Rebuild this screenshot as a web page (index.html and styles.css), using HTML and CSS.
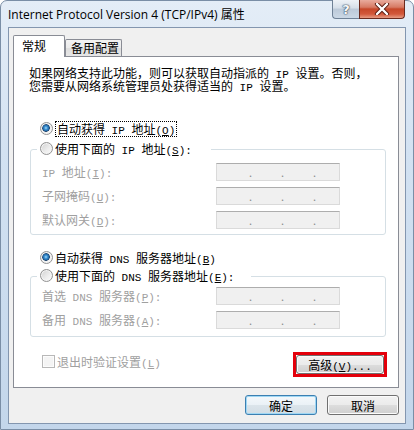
FILE: index.html
```html
<!DOCTYPE html>
<html lang="zh-CN">
<head>
    <meta charset="UTF-8">
    <title>Internet Protocol Version 4 (TCP/IPv4) 属性</title>
    <link rel="stylesheet" href="styles.css">
</head>
<body>
<div class="window">
    <div class="titlebar">
        <div class="title">Internet Protocol Version 4 (TCP/IPv4) 属性</div>
        <div class="caption-btns">
            <div class="cap-btn help">?</div>
            <div class="cap-btn close">
                <svg width="16" height="12" viewBox="0 0 16 12">
                    <path d="M3 1 L13 11 M13 1 L3 11" stroke="#5a1c12" stroke-width="4.2" stroke-linecap="round"/>
                    <path d="M3 1 L13 11 M13 1 L3 11" stroke="#ffffff" stroke-width="2.4" stroke-linecap="round"/>
                </svg>
            </div>
        </div>
    </div>

    <div class="client">
        <div class="tabs">
            <div class="tab active">常规</div>
            <div class="tab other">备用配置</div>
        </div>

        <div class="panel">
            <div class="desc">
                如果网络支持此功能，则可以获取自动指派的<span class="en"> IP </span>设置。否则，<br>
                您需要从网络系统管理员处获得适当的<span class="en"> IP </span>设置。
            </div>

            <div class="opt first-opt">
                <span class="radio checked"></span>
                <span class="focus">自动获得<span class="en"> IP </span>地址<span class="en">(<u>O</u>)</span></span>
            </div>

            <div class="group group-ip">
                <div class="legend legend-ip">
                    <span class="radio"></span>
                    <span>使用下面的<span class="en"> IP </span>地址<span class="en">(<u>S</u>):</span></span>
                </div>
                <div class="field">
                    <label><span class="en">IP </span>地址<span class="en">(<u>I</u>):</span></label>
                    <div class="ipbox"><span class="dot">.</span><span class="dot">.</span><span class="dot">.</span></div>
                </div>
                <div class="field">
                    <label>子网掩码<span class="en">(<u>U</u>):</span></label>
                    <div class="ipbox"><span class="dot">.</span><span class="dot">.</span><span class="dot">.</span></div>
                </div>
                <div class="field">
                    <label>默认网关<span class="en">(<u>D</u>):</span></label>
                    <div class="ipbox"><span class="dot">.</span><span class="dot">.</span><span class="dot">.</span></div>
                </div>
            </div>

            <div class="opt dns-opt">
                <span class="radio checked"></span>
                <span>自动获得<span class="en"> DNS </span>服务器地址<span class="en">(<u>B</u>)</span></span>
            </div>

            <div class="group group-dns">
                <div class="legend legend-dns">
                    <span class="radio"></span>
                    <span>使用下面的<span class="en"> DNS </span>服务器地址<span class="en">(<u>E</u>):</span></span>
                </div>
                <div class="field field-first">
                    <label>首选<span class="en"> DNS </span>服务器<span class="en">(<u>P</u>):</span></label>
                    <div class="ipbox"><span class="dot">.</span><span class="dot">.</span><span class="dot">.</span></div>
                </div>
                <div class="field">
                    <label>备用<span class="en"> DNS </span>服务器<span class="en">(<u>A</u>):</span></label>
                    <div class="ipbox"><span class="dot">.</span><span class="dot">.</span><span class="dot">.</span></div>
                </div>
            </div>

            <div class="bottom-row">
                <div class="check-opt">
                    <span class="checkbox"></span>
                    <span>退出时验证设置<span class="en">(<u>L</u>)</span></span>
                </div>
                <div class="highlight">
                    <button class="btn advanced">高级<span class="en">(<u>V</u>)...</span></button>
                </div>
            </div>
        </div>

        <div class="dialog-btns">
            <button class="btn default">确定</button>
            <button class="btn">取消</button>
        </div>
    </div>
</div>
</body>
</html>
```

FILE: styles.css
```css
body {
    margin: 0;
    font-family: "Noto Sans CJK SC", sans-serif;
    font-size: 12px;
    color: #000;
}

.window {
    width: 414px;
    height: 430px;
    box-sizing: border-box;
    border: 1px solid #7a8ea6;
    border-radius: 7px 7px 0 0;
    padding: 0 7px 5px 7px;
    display: flex;
    flex-direction: column;
    background: linear-gradient(180deg, #e4edf7 0%, #d3e2f2 35%, #c3d6eb 100%);
}

.titlebar {
    height: 27px;
    display: flex;
    justify-content: space-between;
    align-items: flex-start;
}

.title {
    padding-top: 6px;
    font-family: "Open Sans", "Noto Sans CJK SC", sans-serif;
    font-size: 12px;
    line-height: 16px;
    color: #000;
}

.caption-btns {
    display: flex;
    margin-top: -1px;
    margin-right: 1px;
}

.cap-btn {
    height: 19px;
    box-sizing: border-box;
    display: flex;
    align-items: center;
    justify-content: center;
}

.help {
    width: 27px;
    border: 1px solid #6f8196;
    border-top: none;
    border-right: none;
    border-radius: 0 0 0 4px;
    background: linear-gradient(180deg, #eef2f7 0%, #d6dfe9 45%, #bcc9d8 50%, #cbd8e6 100%);
    color: #f7f9fb;
    font-family: "DejaVu Sans", sans-serif;
    font-weight: bold;
    font-size: 13px;
    text-shadow: 0 0 1px #394a5c, 0 0 1px #394a5c, 0 0 2px #51657a;
}

.close {
    width: 46px;
    border: 1px solid #6b2a1e;
    border-top: none;
    border-radius: 0 0 4px 0;
    background: linear-gradient(180deg, #e9ab9d 0%, #d77a64 40%, #c64729 50%, #d2583b 78%, #e79c84 100%);
}

.client {
    flex: 1;
    border: 1px solid #8396af;
    background-color: #f0f0f0;
    padding: 7px 6px 8px 4px;
    display: flex;
    flex-direction: column;
}

.tabs {
    display: flex;
    align-items: flex-end;
}

.tab {
    box-sizing: border-box;
    border: 1px solid #898c95;
    border-bottom: none;
    border-radius: 2px 2px 0 0;
}

.tab.active {
    width: 52px;
    height: 22px;
    margin-bottom: -1px;
    padding-left: 8px;
    line-height: 20px;
    background-color: #fff;
    position: relative;
    z-index: 1;
}

.tab.other {
    width: 57px;
    height: 17px;
    padding-left: 5px;
    line-height: 16px;
    background: linear-gradient(180deg, #f3f3f3 0%, #ebebeb 50%, #dedede 51%, #e6e6e6 100%);
}

.panel {
    width: 386px;
    height: 332px;
    box-sizing: border-box;
    border: 1px solid #898c95;
    background-color: #fff;
}

.en {
    font-family: "Liberation Mono", monospace;
    font-size: 11px;
    line-height: 0;
}

.desc {
    margin: 9px 0 0 15px;
    line-height: 13px;
    white-space: nowrap;
}

.opt {
    height: 17px;
    display: flex;
    align-items: center;
    gap: 1px;
    margin-left: 26px;
}

.first-opt {
    margin-top: 28px;
}

.dns-opt {
    margin-top: 14px;
}

.focus {
    border: 1px dotted #000;
    padding: 0 1px;
    line-height: 14px;
}

.radio {
    width: 13px;
    height: 13px;
    box-sizing: border-box;
    border-radius: 50%;
    border: 1px solid #929292;
    background: linear-gradient(135deg, #d0d0d0 0%, #eeeeee 60%, #fbfbfb 100%);
    box-shadow: inset 0 0 0 1px #f4f4f4;
    flex-shrink: 0;
    margin-right: 1px;
}

.radio.checked {
    background: radial-gradient(circle at 45% 45%, #a4dcfb 0, #3f93d3 1.6px, #1b5e9c 3.2px, #2a4d73 3.6px, rgba(255, 255, 255, 0) 4.1px),
                linear-gradient(135deg, #cfcfcf 0%, #eeeeee 60%, #fbfbfb 100%);
}

.group {
    margin-left: 16px;
    width: 356px;
    box-sizing: border-box;
    border: 1px solid #d5dfe5;
    border-radius: 3px;
}

.group-ip {
    margin-top: 12px;
    height: 86px;
}

.group-dns {
    margin-top: 10px;
    height: 61px;
}

.legend {
    margin: -10px 0 0 6px;
    height: 17px;
    padding-left: 3px;
    display: flex;
    align-items: center;
    gap: 1px;
    background-color: #fff;
}

.legend-ip {
    width: 171px;
}

.legend-dns {
    width: 211px;
}

.field {
    height: 18px;
    margin-top: 6px;
    display: flex;
    align-items: center;
    color: #a0a0a0;
}

.field-first {
    margin-top: 3px;
}

.field label {
    width: 174px;
    padding-left: 11px;
    line-height: 16px;
}

.ipbox {
    width: 124px;
    height: 18px;
    box-sizing: border-box;
    border: 1px solid #dadada;
    border-top-color: #adadad;
    background-color: #f0f0f0;
    display: flex;
    gap: 29px;
    padding-left: 32px;
    line-height: 17px;
    color: #8c8c8c;
}

.dot {
    width: 3px;
    font-size: 11px;
}

.bottom-row {
    margin-top: 15px;
    height: 25px;
    display: flex;
    justify-content: space-between;
    align-items: flex-start;
    padding: 0 11px 0 28px;
}

.check-opt {
    margin-top: 2px;
    height: 15px;
    line-height: 15px;
    display: flex;
    align-items: center;
    gap: 2px;
    color: #a0a0a0;
}

.checkbox {
    width: 13px;
    height: 13px;
    box-sizing: border-box;
    border: 1px solid #b8b8b8;
    background-color: #f4f4f4;
    box-shadow: inset 0 0 0 1px #fcfcfc;
}

.highlight {
    width: 94px;
    height: 25px;
    box-sizing: border-box;
    border: 3px solid #e3000b;
    background-color: #fff;
}

.btn {
    font-family: "Noto Sans CJK SC", sans-serif;
    font-size: 12px;
    color: #000;
    padding: 0;
    box-sizing: border-box;
    border: 1px solid #707070;
    border-radius: 3px;
    background: linear-gradient(180deg, #f2f2f2 0%, #ebebeb 50%, #dddddd 51%, #cfcfcf 100%);
    box-shadow: inset 0 0 0 1px #fbfbfb;
}

.advanced {
    width: 88px;
    height: 19px;
    line-height: 16px;
}

.dialog-btns {
    margin-top: 7px;
    display: flex;
    justify-content: flex-end;
    gap: 10px;
}

.dialog-btns .btn {
    width: 72px;
    height: 20px;
    line-height: 17px;
}

.btn.default {
    border-color: #3c7fb1;
    box-shadow: inset 0 0 0 1px #9fd7f4;
    background: linear-gradient(180deg, #f4f8fb 0%, #eaf1f6 50%, #dbe4ea 51%, #d2dde5 100%);
}
```
